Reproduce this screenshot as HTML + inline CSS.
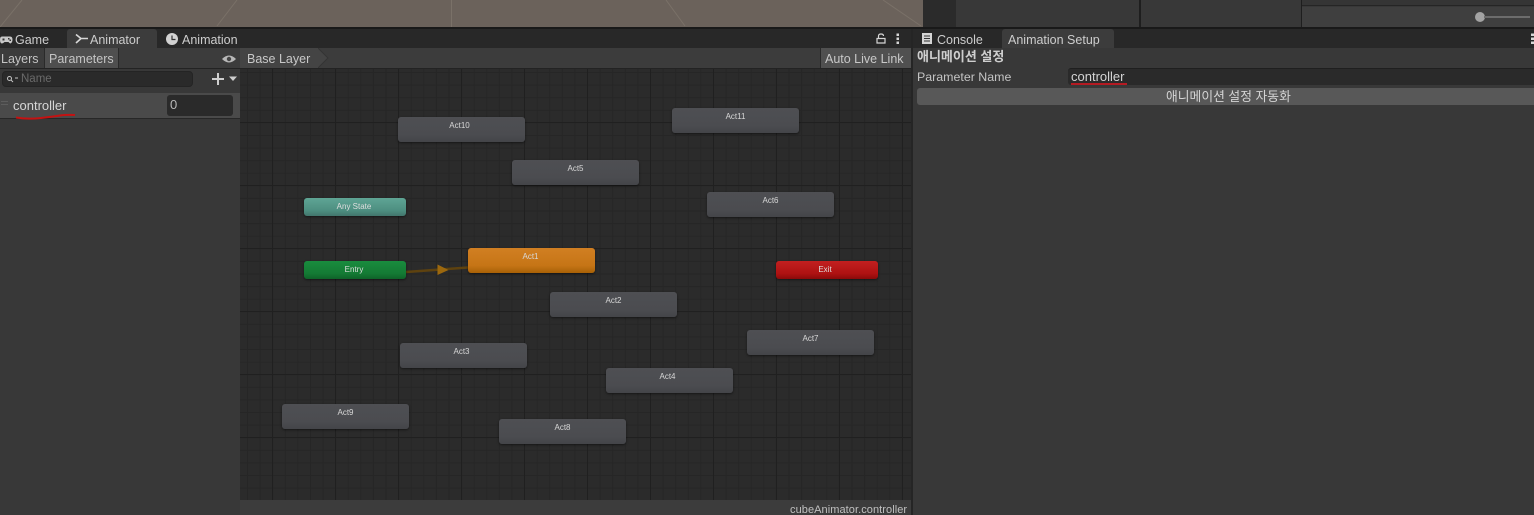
<!DOCTYPE html>
<html><head><meta charset="utf-8"><style>
html,body{margin:0;padding:0;background:#383838}
#r{position:relative;width:1534px;height:515px;overflow:hidden;background:#383838;font-family:"Liberation Sans","Noto Sans CJK KR",sans-serif;color:#cdcdcd;font-size:12.500px}
#r div,#r span.a{position:absolute;box-sizing:border-box;white-space:nowrap}
.t{line-height:16px}
.n{border-radius:3px;text-align:center;color:#d8d8d8;font-size:8px;width:127px;height:25px;line-height:18px;background:linear-gradient(#4e4f53,#4b4c50 70%,#444549);box-shadow:0 1px 2px rgba(0,0,0,.5)}
.g{height:18px;width:102px;border-radius:3px;text-align:center;font-size:8px;line-height:17px;color:#dedede;box-shadow:0 1px 2px rgba(0,0,0,.5)}
</style></head><body><div id="r">
<!-- scene -->
<div style="left:0;top:0;width:923px;height:27px;background:#6b625b"></div>
<svg style="position:absolute;left:0;top:0" width="923" height="27"><g stroke="#7a7168" stroke-width="1" fill="none"><path d="M0 27L22 0M217 26L237 0M451.500 0V27M666 0L685 26M883 0L921 26"/></g></svg>
<div style="left:923px;top:0;width:33px;height:27px;background:#2b2b2b"></div>
<div style="left:956px;top:0;width:578px;height:27px;background:#383838"></div>
<div style="left:1139px;top:0;width:2px;height:27px;background:#1e1e1e"></div>
<div style="left:1301px;top:0;width:1px;height:27px;background:#1e1e1e"></div>
<div style="left:1302px;top:0;width:232px;height:6px;background:#353535;border-bottom:1px solid #252525"></div>
<div style="left:1302px;top:7px;width:232px;height:20px;background:#3f3f3f"></div>
<div style="left:1475px;top:12px;width:10px;height:10px;border-radius:50%;background:#a3a3a3"></div>
<div style="left:1484px;top:16px;width:46px;height:2px;background:#6c6c6c"></div>
<div style="left:0;top:27px;width:1534px;height:2px;background:#191919"></div>
<!-- tabbar -->
<div style="left:0;top:29px;width:1534px;height:19px;background:#282828"></div>
<div style="left:67px;top:29px;width:90px;height:19px;background:#3c3c3c;border-radius:3px 3px 0 0"></div>
<div style="left:1002px;top:29px;width:112px;height:19px;background:#3c3c3c;border-radius:3px 3px 0 0"></div>
<div style="left:911px;top:29px;width:2px;height:486px;background:#252525"></div>
<svg style="position:absolute;left:0;top:36px" width="13" height="9"><path d="M2 0.500H10Q12.500 0.500 12.500 3.500T10.500 7.500Q9.500 7.500 8.500 6H4.500Q3 7.500 2 7.500 0 7.500 0 3.500 0 .5 2 .5z" fill="#c8c8c8"/><rect x="2.500" y="2.500" width="2" height="2" fill="#333"/><rect x="8" y="2" width="1.500" height="1.500" fill="#333"/><rect x="9.500" y="3.500" width="1.500" height="1.500" fill="#333"/></svg>
<div class="t" style="left:15px;top:32px">Game</div>
<svg style="position:absolute;left:75px;top:34px" width="13" height="11" fill="none" stroke="#d8d8d8" stroke-width="1.600"><path d="M1 .5L6 4.500L1 9M6 4.500H13"/></svg>
<div class="t" style="left:90px;top:32px">Animator</div>
<svg style="position:absolute;left:166px;top:33px" width="12" height="12"><circle cx="6" cy="6" r="6" fill="#d2d2d2"/><path d="M6 2.500V6.500H9.500" stroke="#333" stroke-width="1.200" fill="none"/></svg>
<div class="t" style="left:182px;top:32px">Animation</div>
<svg style="position:absolute;left:876px;top:33px" width="10" height="11" fill="none" stroke="#d5d5d5" stroke-width="1.200"><path d="M1 5.500H9V10H1zM2.500 5.500V3Q2.500 1 5 1T7.500 3"/></svg>
<svg style="position:absolute;left:896px;top:33px" width="4" height="11" fill="#d5d5d5"><rect x="0.500" y="0.500" width="2.500" height="2.500"/><rect x="0.500" y="4.500" width="2.500" height="2.500"/><rect x="0.500" y="8.500" width="2.500" height="2.500"/></svg>
<svg style="position:absolute;left:922px;top:33px" width="10" height="11"><rect width="10" height="11" fill="#d5d5d5"/><path d="M2 3h6M2 5.500h6M2 8h6" stroke="#333"/></svg>
<div class="t" style="left:937px;top:32px">Console</div>
<div class="t" style="left:1008px;top:32px">Animation Setup</div>
<svg style="position:absolute;left:1531px;top:33px" width="3" height="11" fill="#d5d5d5"><rect width="3" height="2.500" y="0.500"/><rect width="3" height="2.500" y="4.500"/><rect width="3" height="2.500" y="8.500"/></svg>
<!-- left panel -->
<div style="left:0;top:48px;width:240px;height:21px;background:#3c3c3c;border-bottom:1px solid #232323"></div>
<div style="left:44px;top:48px;width:75px;height:20px;background:#4f4f4f;border-left:1px solid #2a2a2a;border-right:1px solid #2a2a2a"></div>
<div class="t" style="left:1px;top:51px;color:#c4c4c4">Layers</div>
<div class="t" style="left:49px;top:51px;color:#c4c4c4">Parameters</div>
<svg style="position:absolute;left:222px;top:54px" width="14" height="10"><path d="M0 5Q7 -2 14 5Q7 12 0 5z" fill="#b8b8b8"/><circle cx="7" cy="5" r="2.200" fill="#444"/></svg>
<div style="left:2px;top:71px;width:191px;height:16px;background:#2a2a2a;border-radius:4px;border:1px solid #242424"></div>
<svg style="position:absolute;left:6px;top:75px" width="12" height="8" fill="none" stroke="#c4c4c4"><circle cx="3.500" cy="3.500" r="2"/><path d="M5 5L7 7M9 3h3"/></svg>
<div class="t" style="left:21px;top:71px;color:#6a6a6a;font-size:11.500px">Name</div>
<svg style="position:absolute;left:211px;top:72px" width="27" height="14" fill="#cfcfcf"><path d="M6 1h2v5h5v2H8v5H6V8H1V6h5z"/><path d="M18 4.500h8L22 9z"/></svg>
<div style="left:0;top:93px;width:240px;height:26px;background:#4a4a4a;border-bottom:1px solid #272727"></div>
<div style="left:1px;top:101px;width:7px;height:1px;background:#5d5d5d"></div>
<div style="left:1px;top:104px;width:7px;height:1px;background:#5d5d5d"></div>
<div class="t" style="left:13px;top:98px;color:#d6d6d6;font-size:13px">controller</div>
<div style="left:167px;top:95px;width:66px;height:21px;background:#2a2a2a;border-radius:3px"></div>
<div class="t" style="left:170px;top:97px;color:#b8b8b8;font-size:13px">0</div>
<svg style="position:absolute;left:0;top:110px" width="90" height="12" fill="none"><path d="M16 7.500Q28 9.500 41 8T60 5.500T75 5" stroke="#c41212" stroke-width="2"/></svg>
<!-- breadcrumb -->
<div style="left:240px;top:48px;width:671px;height:21px;background:#3c3c3c;border-bottom:1px solid #232323"></div>
<div style="left:240px;top:48px;width:78px;height:20px;background:#444"></div>
<svg style="position:absolute;left:318px;top:48px" width="12" height="20"><path d="M0 0L10 10L0 20z" fill="#444"/><path d="M0 0L10 10L0 20" fill="none" stroke="#343434"/></svg>
<div class="t" style="left:247px;top:51px;color:#c8c8c8">Base Layer</div>
<div style="left:820px;top:48px;width:91px;height:20px;background:#505050;border-left:1px solid #2a2a2a"></div>
<div class="t" style="left:825px;top:51px;color:#c8c8c8">Auto Live Link</div>
<!-- graph -->
<div style="left:240px;top:69px;width:671px;height:431px;background-color:#2b2b2b;background-image:linear-gradient(90deg,#202020 1px,transparent 1px),linear-gradient(#202020 1px,transparent 1px),linear-gradient(90deg,#262626 1px,transparent 1px),linear-gradient(#262626 1px,transparent 1px);background-size:63px 63px,63px 63px,12.600px 12.600px,12.600px 12.600px;background-position:32px 53px,32px 53px,7px 3px,7px 3px"></div>
<svg style="position:absolute;left:400px;top:255px" width="72" height="25"><path d="M6 17L68 12.500" stroke="#5e420f" stroke-width="2.500"/><path d="M37.500 9.500L48.500 15L37.500 20z" fill="#9c680e"/></svg>
<div class="n" style="left:398px;top:117px;padding-right:4px">Act10</div>
<div class="n" style="left:672px;top:108px">Act11</div>
<div class="n" style="left:512px;top:160px">Act5</div>
<div class="n" style="left:707px;top:192px">Act6</div>
<div class="n" style="left:550px;top:292px">Act2</div>
<div class="n" style="left:747px;top:330px">Act7</div>
<div class="n" style="left:400px;top:343px;padding-right:4px">Act3</div>
<div class="n" style="left:606px;top:368px;padding-right:4px">Act4</div>
<div class="n" style="left:282px;top:404px">Act9</div>
<div class="n" style="left:499px;top:419px">Act8</div>
<div class="n" style="left:468px;top:248px;padding-right:2px;background:linear-gradient(#d17f22,#c67516 70%,#a86106)">Act1</div>
<div class="g" style="left:304px;top:198px;padding-right:2px;background:linear-gradient(#5fa595,#4d8e80 70%,#42766c)">Any State</div>
<div class="g" style="left:304px;top:261px;padding-right:2px;background:linear-gradient(#198c3e,#147a34 70%,#0f6329)">Entry</div>
<div class="g" style="left:776px;top:261px;padding-right:4px;background:linear-gradient(#c22020,#ae1212 70%,#8a0a0a)">Exit</div>
<div style="left:240px;top:500px;width:671px;height:15px;background:#3c3c3c"></div>
<div style="left:790px;top:503px;font-size:11px;line-height:14px;color:#c0c0c0;letter-spacing:.07px">cubeAnimator.controller</div>
<!-- right panel -->
<div class="t" style="left:917px;top:49px;font-size:13px;font-weight:bold;color:#cfcfcf">애니메이션 설정</div>
<div class="t" style="left:917px;top:69px;color:#c4c4c4;font-size:12.400px">Parameter Name</div>
<div style="left:1068px;top:68px;width:466px;height:17px;background:#2a2a2a;border-top:1px solid #1f1f1f;border-radius:3px 0 0 3px"></div>
<div class="t" style="left:1071px;top:69px;color:#d4d4d4;font-size:13px">controller</div>
<div style="left:1071px;top:83px;width:56px;height:2px;background:#b51a22"></div>
<div style="left:917px;top:88px;width:617px;height:17px;background:#585858;border-radius:3px 0 0 3px"></div>
<div class="t" style="left:1166px;top:89px;color:#d4d4d4;font-size:12.800px">애니메이션 설정 자동화</div>
</div></body></html>
